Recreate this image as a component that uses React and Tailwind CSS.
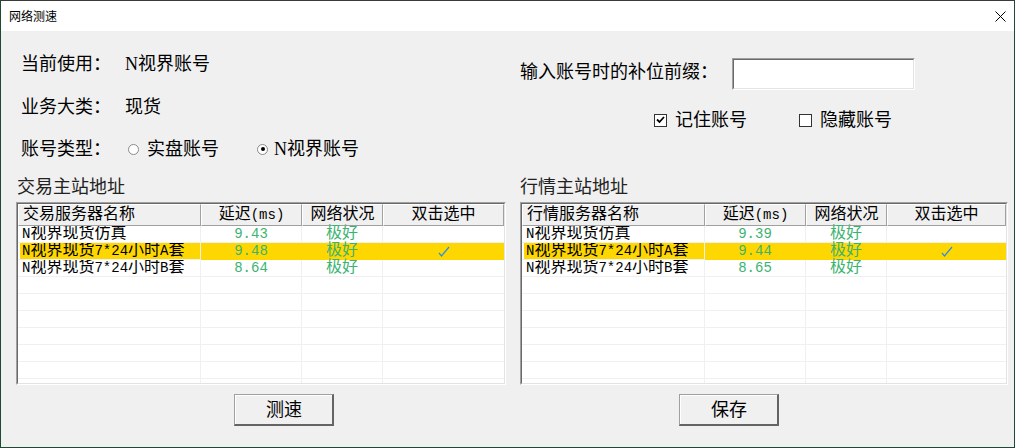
const serif = "[font-family:'Liberation_Serif','Noto_Sans_CJK_SC',serif]";

const tradeRows = [
  { name: "N视界现货仿真", ms: "9.43" },
  { name: "N视界现货7*24小时A套", ms: "9.48", sel: true },
  { name: "N视界现货7*24小时B套", ms: "8.65".replace("8.65", "8.64") },
];

const quoteRows = [
  { name: "N视界现货仿真", ms: "9.39" },
  { name: "N视界现货7*24小时A套", ms: "9.44", sel: true },
  { name: "N视界现货7*24小时B套", ms: "8.65" },
];

// ascii runs are narrower in the original font, so draw them a bit smaller
function Mixed({ text }) {
  const parts = text.split(/([\x20-\x7e]+)/).filter(Boolean);
  return parts.map((p, i) =>
    /^[\x20-\x7e]+$/.test(p) ? (
      <span key={i} className="text-[14px]">{p}</span>
    ) : (
      <span key={i}>{p}</span>
    )
  );
}

function Radio({ checked }) {
  return (
    <span className="w-[11px] h-[11px] rounded-full border border-[#8a8a8a] bg-white flex items-center justify-center">
      {checked && <span className="w-[4px] h-[4px] rounded-full bg-black" />}
    </span>
  );
}

function CheckBox({ checked }) {
  return (
    <span className="w-[13px] h-[13px] border border-[#333333] bg-white flex items-center justify-center">
      {checked && (
        <svg width="9" height="8" viewBox="0 0 9 8">
          <path d="M1 3.5 L3.5 6 L8 1" fill="none" stroke="#000" strokeWidth="1.8" />
        </svg>
      )}
    </span>
  );
}

function Tick() {
  return (
    <svg width="12" height="11" viewBox="0 0 12 11">
      <path d="M1 7 L3.5 10 L11 1" fill="none" stroke="#2b8fe0" strokeWidth="1.2" />
    </svg>
  );
}

function ServerTable({ title, rows }) {
  const head = "h-full flex items-center justify-center bg-[#f0f0f0] border-t border-l border-white border-r border-b border-r-[#a0a0a0] border-b-[#a0a0a0]";
  const empty = Array.from({ length: 7 });
  return (
    <div className="h-[183px] border-t border-l border-[#a0a0a0] border-b border-r border-b-white border-r-white">
      <div className="h-full border-t border-l border-[#696969] border-b border-r border-b-[#e3e3e3] border-r-[#e3e3e3] bg-white overflow-hidden [font-family:'Liberation_Mono','Noto_Sans_CJK_SC',monospace] text-[16px] text-black">
        <div className="h-[22px] flex">
          <div className={`w-[183px] ${head} !justify-start pl-[4px]`}>{title}</div>
          <div className={`w-[101px] ${head}`}><Mixed text="延迟(ms)" /></div>
          <div className={`w-[81px] ${head}`}>网络状况</div>
          <div className={`flex-1 ${head}`}>双击选中</div>
        </div>
        {rows.map((r) => {
          const cell = r.sel ? "bg-[#ffd700] border-[#ffd700]" : "border-[#f0f0f0]";
          return (
            <div key={r.name} className="h-[17px] flex leading-[16px]">
              <div className="w-[183px] pl-[2px] border-r border-b border-[#f0f0f0] flex">
                <div className={`flex-1 pl-[2px] whitespace-nowrap overflow-hidden ${r.sel ? "bg-[#ffd700]" : ""}`}>
                  <Mixed text={r.name} />
                </div>
              </div>
              <div className={`w-[101px] border-r border-b ${cell} text-center text-[14px] text-[#3cb371]`}>{r.ms}</div>
              <div className={`w-[81px] border-r border-b ${cell} text-center text-[#3cb371]`}>极好</div>
              <div className={`flex-1 border-b ${cell} flex items-center justify-center`}>{r.sel && <Tick />}</div>
            </div>
          );
        })}
        {empty.map((_, i) => (
          <div key={i} className="h-[17px] flex">
            <div className="w-[183px] border-r border-b border-[#f0f0f0]" />
            <div className="w-[101px] border-r border-b border-[#f0f0f0]" />
            <div className="w-[81px] border-r border-b border-[#f0f0f0]" />
            <div className="flex-1 border-b border-[#f0f0f0]" />
          </div>
        ))}
      </div>
    </div>
  );
}

function Button({ children }) {
  return (
    <button className="w-[100px] h-[32px] border border-[#a0a0a0] border-b-2 border-r-2 border-b-[#646464] border-r-[#646464] bg-[#f0f0f0]">
      <span className="h-full flex items-center justify-center border-t border-l border-white text-[18px] text-black">{children}</span>
    </button>
  );
}

export default function App() {
  return (
    <div className="w-[1015px] h-[448px] flex flex-col border-x border-b border-[#1c4a32] border-t border-t-[#3a3a3a] bg-[#f0f0f0]">
      {/* TITLE BAR */}
      <div className="h-[30px] bg-white flex items-center justify-between pl-[8px] pr-[8px]">
        <span className="[font-family:'Noto_Sans_CJK_SC',sans-serif] text-[12px] text-black">网络测速</span>
        <svg width="11" height="11" viewBox="0 0 11 11">
          <path d="M0.5 0.5 L10.5 10.5 M10.5 0.5 L0.5 10.5" stroke="#000" strokeWidth="1" />
        </svg>
      </div>

      <div className={`flex-1 flex flex-col ${serif} text-[18px] text-black`}>
        {/* TOP SETTINGS */}
        <div className="h-[143px] flex">
          <div className="w-[518px] pl-[20px] pt-[22px] flex flex-col">
            <div className="h-[22px] leading-[22px] flex">
              <span className="w-[104px]">当前使用：</span>
              <span>N视界账号</span>
            </div>
            <div className="h-[22px] leading-[22px] flex mt-[21px]">
              <span className="w-[104px]">业务大类：</span>
              <span>现货</span>
            </div>
            <div className="h-[22px] leading-[22px] flex items-center mt-[20px]">
              <span className="w-[107px]">账号类型：</span>
              <Radio />
              <span className="ml-[8px]">实盘账号</span>
              <span className="ml-[38px]"><Radio checked /></span>
              <span className="ml-[6px]">N视界账号</span>
            </div>
          </div>

          <div className="flex-1 flex flex-col">
            <div className="mt-[27px] h-[32px] flex items-center">
              <span className="w-[213px] pl-[1px] mb-[5px] leading-[22px]">输入账号时的补位前缀：</span>
              <div className="w-[183px] h-[32px] border-t border-l border-[#a0a0a0] border-b border-r border-b-white border-r-white">
                <div className="h-full border-t border-l border-[#696969] border-b border-r border-b-[#e3e3e3] border-r-[#e3e3e3] bg-white" />
              </div>
            </div>
            <div className="mt-[19px] h-[22px] leading-[22px] pl-[135px] flex items-center">
              <CheckBox checked />
              <span className="ml-[8px]">记住账号</span>
              <span className="ml-[52px]"><CheckBox /></span>
              <span className="ml-[8px]">隐藏账号</span>
            </div>
          </div>
        </div>

        {/* SERVER LISTS */}
        <div className="flex pl-[15px] gap-[14px]">
          <div className="w-[490px] flex flex-col">
            <div className="h-[26px] leading-[26px] pl-[1px] text-[#222]">交易主站地址</div>
            <div className="mt-[2px]">
              <ServerTable title="交易服务器名称" rows={tradeRows} />
            </div>
            <div className="mt-[9px] ml-[218px]">
              <Button>测速</Button>
            </div>
          </div>
          <div className="w-[488px] flex flex-col">
            <div className="h-[26px] leading-[26px] text-[#222]">行情主站地址</div>
            <div className="mt-[2px]">
              <ServerTable title="行情服务器名称" rows={quoteRows} />
            </div>
            <div className="mt-[9px] ml-[159px]">
              <Button>保存</Button>
            </div>
          </div>
        </div>
      </div>
    </div>
  );
}
